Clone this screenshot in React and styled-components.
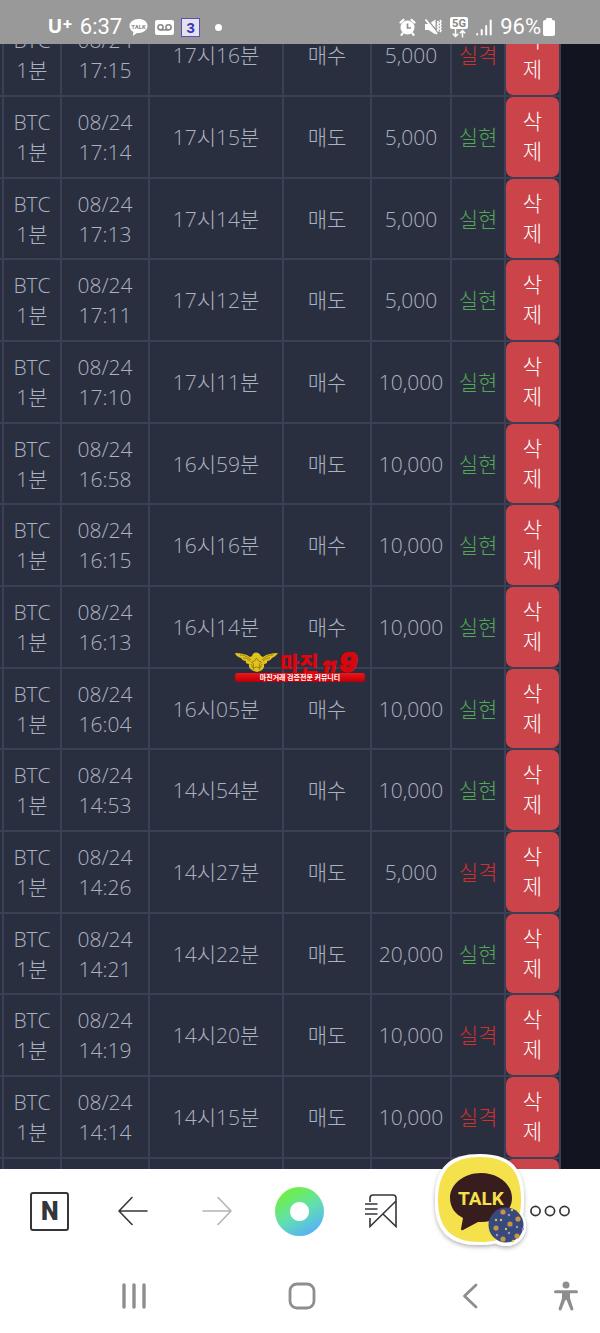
import React from 'react'
import styled, { createGlobalStyle } from 'styled-components'

const KOREAN = '"Noto Sans CJK KR", sans-serif'

const COLORS = {
    page: '#12151f',
    cell: '#2a2f40',
    line: '#3b4056',
    text: '#adb2c0',
    win: '#52a854',
    lose: '#d2302c',
    remove: '#cb444a',
    status: '#999999',
    icon: '#33363b',
    nav: '#8e8e8e'
}

const ORDERS = [
    { time: '17:15', target: '17시16분', side: '매수', amount: '5,000', win: false },
    { time: '17:14', target: '17시15분', side: '매도', amount: '5,000', win: true },
    { time: '17:13', target: '17시14분', side: '매도', amount: '5,000', win: true },
    { time: '17:11', target: '17시12분', side: '매도', amount: '5,000', win: true },
    { time: '17:10', target: '17시11분', side: '매수', amount: '10,000', win: true },
    { time: '16:58', target: '16시59분', side: '매도', amount: '10,000', win: true },
    { time: '16:15', target: '16시16분', side: '매수', amount: '10,000', win: true },
    { time: '16:13', target: '16시14분', side: '매수', amount: '10,000', win: true },
    { time: '16:04', target: '16시05분', side: '매수', amount: '10,000', win: true },
    { time: '14:53', target: '14시54분', side: '매수', amount: '10,000', win: true },
    { time: '14:26', target: '14시27분', side: '매도', amount: '5,000', win: false },
    { time: '14:21', target: '14시22분', side: '매도', amount: '20,000', win: true },
    { time: '14:19', target: '14시20분', side: '매도', amount: '10,000', win: false },
    { time: '14:14', target: '14시15분', side: '매도', amount: '10,000', win: false }
]

const COLUMNS = [4, 58, 88, 134, 88, 80, 54, 55]

const GlobalStyle = createGlobalStyle`
    * {
        box-sizing: border-box;
    }
    body {
        margin: 0;
        background: ${COLORS.page};
    }
    button {
        border: 0;
        padding: 0;
        background: none;
        font: inherit;
        color: inherit;
        cursor: pointer;
    }
    svg {
        display: block;
    }
`

const Screen = styled.div`
    position: relative;
    display: flex;
    flex-direction: column;
    height: 100vh;
    overflow: hidden;
    font-family: "Open Sans", ${KOREAN};
`

const StatusBar = styled.header`
    display: flex;
    justify-content: space-between;
    align-items: center;
    height: 44px;
    flex-shrink: 0;
    padding: 10px 45px 0 48px;
    background: ${COLORS.status};
    color: white;
    font-family: Roboto, sans-serif;
    font-size: 22px;
    line-height: 24px;
`

const StatusGroup = styled.div`
    display: flex;
    align-items: center;
    gap: ${({ $gap }) => $gap}px;
`

const Carrier = styled.span`
    display: flex;
    font-family: Inter, sans-serif;
    font-size: 19px;
    font-weight: 700;
    sup {
        font-size: 16px;
        line-height: 16px;
    }
`

const Badge = styled.span`
    width: 19px;
    height: 19px;
    border: 1px solid #5b4fc0;
    background: #e4e2ea;
    color: #3a35c4;
    font-family: "Liberation Sans", sans-serif;
    font-size: 15px;
    font-weight: 700;
    line-height: 18px;
    text-align: center;
`

const Dot = styled.span`
    width: 7px;
    height: 7px;
    margin-left: 8px;
    border-radius: 50%;
    background: white;
`

const ListPane = styled.main`
    flex: 1;
    min-height: 0;
    overflow: hidden;
    padding-right: 39px;
`

const OrderTable = styled.table`
    width: 100%;
    margin-top: -29px;
    table-layout: fixed;
    border-collapse: separate;
    border-spacing: 0;
    color: ${COLORS.text};
    font-size: 21px;
    font-weight: 300;
    line-height: 30px;
    text-align: center;
`

const Cell = styled.td`
    height: 82px;
    padding: 0;
    border-right: 2px solid ${COLORS.line};
    border-bottom: 2px solid ${COLORS.line};
    background: ${COLORS.cell};
    color: ${({ $color }) => $color || 'inherit'};
    white-space: nowrap;
    tr:nth-child(3n) > & {
        height: 81px;
    }
`

const Line = styled.span`
    display: block;
`

const DeleteButton = styled.button`
    display: block;
    width: 100%;
    min-height: 80px;
    padding: 9px 12px 11px;
    border-radius: 7px;
    background: ${COLORS.remove};
    color: white;
    font-weight: 300;
    white-space: normal;
    tr:nth-child(3n) & {
        min-height: 79px;
        padding-bottom: 10px;
    }
`

const Watermark = styled.div`
    position: absolute;
    top: 50%;
    left: 50%;
    width: 130px;
    transform: translate(-50%, -50%);
    font-family: ${KOREAN};
`

const WatermarkTop = styled.div`
    display: flex;
    align-items: center;
    gap: 2px;
    height: 21px;
    color: #e0040c;
    font-size: 21px;
    font-weight: 900;
    line-height: 20px;
`

const WatermarkBar = styled.div`
    height: 9px;
    border-radius: 3px;
    background: linear-gradient(#f0141a, #b80006);
    color: white;
    font-size: 7px;
    font-weight: 700;
    line-height: 8px;
    text-align: center;
    white-space: nowrap;
`

const Toolbar = styled.nav`
    display: grid;
    grid-template-columns: repeat(7, 1fr);
    align-items: center;
    height: 84px;
    flex-shrink: 0;
    padding: 0 8px;
    background: white;
    color: ${COLORS.icon};
`

const ToolButton = styled.button`
    display: flex;
    justify-content: center;
    align-items: center;
    height: 56px;
    color: ${({ $muted }) => ($muted ? '#b4b4b4' : 'inherit')};
    &:last-child {
        grid-column: 7;
    }
`

const NaverBox = styled.span`
    width: 39px;
    height: 39px;
    border: 2px solid ${COLORS.icon};
    border-radius: 3px;
    font-family: Roboto, sans-serif;
    font-size: 25px;
    font-weight: 900;
    line-height: 35px;
`

const Ring = styled.span`
    width: 49px;
    height: 49px;
    border-radius: 50%;
    background: radial-gradient(circle, white 9px, transparent 10px),
        linear-gradient(150deg, #6cee52 20%, #62dfb0 52%, #58b4f2 85%);
`

const SystemNav = styled.nav`
    display: grid;
    grid-template-columns: 1fr 1fr 1fr 46px;
    align-items: center;
    height: 80px;
    flex-shrink: 0;
    padding: 5px 0 0 50px;
    background: white;
    color: ${COLORS.nav};
`

const NavButton = styled.button`
    display: flex;
    justify-content: center;
    &:last-child {
        justify-content: flex-start;
    }
`

const TalkBubble = styled.button`
    position: absolute;
    right: 69px;
    bottom: 80px;
`

const TalkIcon = () => (
    <svg width="19" height="19" viewBox="0 0 19 19">
        <path fill="white" d="M9.500 1C4.500 1 .5 4 .5 8c0 2.600 1.700 4.800 4 6l-.8 4 4.300-3c5.600.3 10.500-2.500 10.500-7S14.500 1 9.500 1z" />
        <text x="9.500" y="10.500" textAnchor="middle" fontFamily="Roboto, sans-serif" fontWeight="700" fontSize="6" fill="#8a8a8a">TALK</text>
    </svg>
)

const VoicemailIcon = () => (
    <svg width="19" height="15" viewBox="0 0 19 15">
        <rect width="19" height="15" rx="2" fill="white" />
        <g fill="none" stroke="#8a8a8a" strokeWidth="1.600">
            <circle cx="5.500" cy="7.300" r="2.600" />
            <circle cx="13.500" cy="7.300" r="2.600" />
            <path d="M5.500 9.900h8" />
        </g>
    </svg>
)

const AlarmIcon = () => (
    <svg width="17" height="18" viewBox="0 0 17 18">
        <circle cx="8.500" cy="9.500" r="7" fill="white" />
        <g fill="none" stroke="white" strokeWidth="2.200" strokeLinecap="round">
            <path d="M1.500 4.500 4.500 1.800M15.500 4.500 12.500 1.800M3.500 15.500l-1 1.300M13.500 15.500l1 1.300" />
        </g>
        <path d="M8.500 5.500v4.500h3.500" fill="none" stroke="#8f8f8f" strokeWidth="1.700" />
    </svg>
)

const MuteIcon = () => (
    <svg width="18" height="18" viewBox="0 0 18 18" fill="none" stroke="white">
        <path d="M1 6h3.500l7-4.500v15l-7-4.500H1z" fill="white" stroke="none" />
        <path d="M2.500 .5 14 14.500" stroke="#999" strokeWidth="1.500" />
        <path d="M1.500 1.500 13 16" strokeWidth="1.800" />
        <path d="M13.500 3l1 1.500-1 1.500 1 1.500-1 1.500 1 1.500-1 1.500 1 1.500M16 2l1 1.500-1 1.500 1 1.500-1 1.500 1 1.500-1 1.500 1 1.500-1 1.500" strokeWidth="1.500" />
    </svg>
)

const FiveGIcon = () => (
    <svg width="18" height="21" viewBox="0 0 18 21">
        <rect width="18" height="12" rx="2" fill="white" />
        <text x="9" y="10" textAnchor="middle" fontFamily="Roboto, sans-serif" fontWeight="700" fontSize="11" fill="#858585">5G</text>
        <g fill="none" stroke="white" strokeWidth="1.500">
            <path d="M5.500 12v7.500M2.800 16.800l2.700 2.700 2.700-2.700M12.500 20.500v-7M9.800 16.200l2.700-2.700 2.700 2.700" />
        </g>
    </svg>
)

const SignalIcon = () => (
    <svg width="16" height="17" viewBox="0 0 16 17" stroke="white" strokeWidth="2" strokeLinecap="round">
        <path d="M1.200 15.500v-.5M5.700 15.500V11M10.200 15.500V7M14.700 15.500V1.500" />
    </svg>
)

const BatteryIcon = () => (
    <svg width="12" height="18" viewBox="0 0 12 18" fill="white">
        <rect x="3" width="6" height="5" rx="1" />
        <rect y="2" width="12" height="16" rx="2" />
    </svg>
)

const ArrowIcon = ({ forward }) => (
    <svg width="30" height="30" viewBox="0 0 30 30" fill="none" stroke="currentColor" strokeWidth="1.600" strokeLinecap="round" strokeLinejoin="round">
        {forward ? <path d="M1 15h28M16 1.500 29 15 16 28.500" /> : <path d="M29 15H1M14 1.500 1 15l13 13.500" />}
    </svg>
)

const BookmarkIcon = () => (
    <svg width="36" height="34" viewBox="0 0 36 34" fill="none" stroke="currentColor" strokeWidth="1.600">
        <path d="M5 8V4q0-3 3-3h20q3 0 3 3v28.500L18 20M5 24v8.500L31 7M0 10h12.500M0 15h12.500M0 20h12.500" />
    </svg>
)

const MoreIcon = () => (
    <svg width="40" height="12" viewBox="0 0 40 12" fill="none" stroke="currentColor" strokeWidth="1.700">
        <circle cx="5.500" cy="6" r="4.600" />
        <circle cx="20" cy="6" r="4.600" />
        <circle cx="34.500" cy="6" r="4.600" />
    </svg>
)

const RecentIcon = () => (
    <svg width="26" height="26" viewBox="0 0 26 26" stroke="currentColor" strokeWidth="3.400" strokeLinecap="round">
        <path d="M3 2v22M13 2v22M23 2v22" />
    </svg>
)

const HomeIcon = () => (
    <svg width="28" height="28" viewBox="0 0 28 28" fill="none" stroke="currentColor" strokeWidth="2.800">
        <rect x="2" y="2" width="24" height="24" rx="7" />
    </svg>
)

const BackIcon = () => (
    <svg width="16" height="26" viewBox="0 0 16 26" fill="none" stroke="currentColor" strokeWidth="2.800" strokeLinecap="round" strokeLinejoin="round">
        <path d="M14 2 2.500 13 14 24" />
    </svg>
)

const AccessIcon = () => (
    <svg width="24" height="30" viewBox="0 0 24 30" fill="currentColor">
        <circle cx="12" cy="4" r="3.500" />
        <path d="M1.500 9.300h21q1.500 0 1.500 1.500t-1.500 1.500H16v5l3.300 10.300q.4 1.500-1 1.900t-1.900-1L12.600 19h-1.200L7.600 28.500q-.5 1.400-1.900 1t-1-1.900L8 17.300v-5H1.500Q0 12.300 0 10.800t1.500-1.500z" />
    </svg>
)

const EagleIcon = () => (
    <svg width="43" height="20" viewBox="0 0 43 20">
        <path fill="#e2c21c" d="M0 1c6 0 11 1 15 4l2-1c1-4 6-5 9 0l2 1c4-3 9-4 15-4-2 3-4 4-6 5-1 2-3 3-5 3 1 2-1 3-3 3 1 4-2 7-7 8-5-1-9-4-8-8-2 0-4-1-3-3-2 0-4-1-5-3-3-1-5-2-6-5z" />
        <path fill="none" stroke="#80680c" strokeWidth=".7" d="M5 3c5 0 8 2 11 5M38 3c-5 0-8 2-11 5M8 6c3 0 5 1 7 3M35 6c-3 0-5 1-7 3M21.500 6l2 3 3 1-2 2v4l-3-1-3 1v-4l-2-2 3-1zM16 12l3 6M27 12l-3 6" />
    </svg>
)

const NinesIcon = () => (
    <svg width="42" height="21" viewBox="0 0 42 21">
        <g fill="#d8060d" stroke="#d8060d" fontFamily="Inter, sans-serif" fontStyle="italic" fontWeight="900">
            <text x="1" y="20" fontSize="15">11</text>
            <text x="18" y="20" fontSize="27">9</text>
        </g>
    </svg>
)

const FLOWERS = [[72, 59], [79, 71], [65, 75], [86, 83], [72, 86], [87, 66]]
const PETALS = [[78, 62], [70, 67], [86, 74], [65, 67], [78, 80], [81, 57], [92, 76], [75, 76], [66, 82], [82, 88]]

const TalkSticker = () => (
    <svg width="100" height="100" viewBox="0 0 100 100">
        <defs>
            <filter id="soft" x="-10%" y="-10%" width="120%" height="125%">
                <feDropShadow dx="0" dy="2" stdDeviation="2" floodColor="#000" floodOpacity=".3" />
            </filter>
        </defs>
        <g filter="url(#soft)" fill="white">
            <path d="M49 1C79 1 93 14 93 47S79 92 49 92 4 80 4 47 18 1 49 1z" />
            <circle cx="75" cy="73" r="20" />
        </g>
        <path fill="#f5e14b" d="M49 4C76 4 90 16 90 47S76 89 49 89 7 77 7 47 21 4 49 4z" />
        <path fill="#371d1e" d="M50 20c-17 0-31 11-31 25 0 9 5 16 13 20l-2 11q0 2 2 1l15-8c19 1 34-9 34-24 0-14-14-25-31-25z" />
        <text x="50" y="52" textAnchor="middle" fontFamily="Roboto, sans-serif" fontWeight="700" fontSize="19" fill="#f5e14b">TALK</text>
        <circle cx="75" cy="72" r="17.500" fill="#364a7d" />
        {FLOWERS.map(([x, y]) => <circle key={`${x}-${y}`} cx={x} cy={y} r="2.600" fill="#cc923d" />)}
        {PETALS.map(([x, y], i) => <circle key={`${x}-${y}`} cx={x} cy={y} r="1.200" fill={i % 2 ? '#d6c350' : '#b58ac2'} />)}
    </svg>
)

function OrderRow({ order }) {
    return (
        <tr>
            <Cell />
            <Cell>
                <Line>BTC</Line>
                <Line>1분</Line>
            </Cell>
            <Cell>
                <Line>08/24</Line>
                <Line>{order.time}</Line>
            </Cell>
            <Cell>{order.target}</Cell>
            <Cell>{order.side}</Cell>
            <Cell>{order.amount}</Cell>
            <Cell $color={order.win ? COLORS.win : COLORS.lose}>{order.win ? '실현' : '실격'}</Cell>
            <Cell>
                <DeleteButton type="button">삭제</DeleteButton>
            </Cell>
        </tr>
    )
}

function EmptyRow() {
    return (
        <tr>
            {COLUMNS.slice(1).map((width, i) => <Cell key={i} />)}
            <Cell>
                <DeleteButton type="button" aria-label="삭제" />
            </Cell>
        </tr>
    )
}

export default function App() {
    return (
        <Screen>
            <GlobalStyle />
            <StatusBar>
                <StatusGroup $gap={7}>
                    <Carrier>U<sup>+</sup></Carrier>
                    <span>6:37</span>
                    <TalkIcon />
                    <VoicemailIcon />
                    <Badge>3</Badge>
                    <Dot />
                </StatusGroup>
                <StatusGroup $gap={8}>
                    <AlarmIcon />
                    <MuteIcon />
                    <FiveGIcon />
                    <SignalIcon />
                    <StatusGroup $gap={2}>
                        <span>96%</span>
                        <BatteryIcon />
                    </StatusGroup>
                </StatusGroup>
            </StatusBar>
            <ListPane>
                <OrderTable>
                    <colgroup>
                        {COLUMNS.map((width, i) => <col key={i} width={width} />)}
                    </colgroup>
                    <tbody>
                        {ORDERS.map((order, i) => <OrderRow key={i} order={order} />)}
                        <EmptyRow />
                    </tbody>
                </OrderTable>
            </ListPane>
            <Toolbar>
                <ToolButton type="button"><NaverBox>N</NaverBox></ToolButton>
                <ToolButton type="button" aria-label="뒤로"><ArrowIcon /></ToolButton>
                <ToolButton type="button" aria-label="앞으로" $muted><ArrowIcon forward /></ToolButton>
                <ToolButton type="button" aria-label="홈"><Ring /></ToolButton>
                <ToolButton type="button" aria-label="북마크"><BookmarkIcon /></ToolButton>
                <ToolButton type="button" aria-label="더보기"><MoreIcon /></ToolButton>
            </Toolbar>
            <SystemNav>
                <NavButton type="button" aria-label="최근 앱"><RecentIcon /></NavButton>
                <NavButton type="button" aria-label="홈 화면"><HomeIcon /></NavButton>
                <NavButton type="button" aria-label="이전"><BackIcon /></NavButton>
                <NavButton type="button" aria-label="접근성"><AccessIcon /></NavButton>
            </SystemNav>
            <Watermark>
                <WatermarkTop>
                    <EagleIcon />
                    <span>마진</span>
                    <NinesIcon />
                </WatermarkTop>
                <WatermarkBar>마진거래 검증전문 커뮤니티</WatermarkBar>
            </Watermark>
            <TalkBubble type="button">
                <TalkSticker />
            </TalkBubble>
        </Screen>
    )
}
